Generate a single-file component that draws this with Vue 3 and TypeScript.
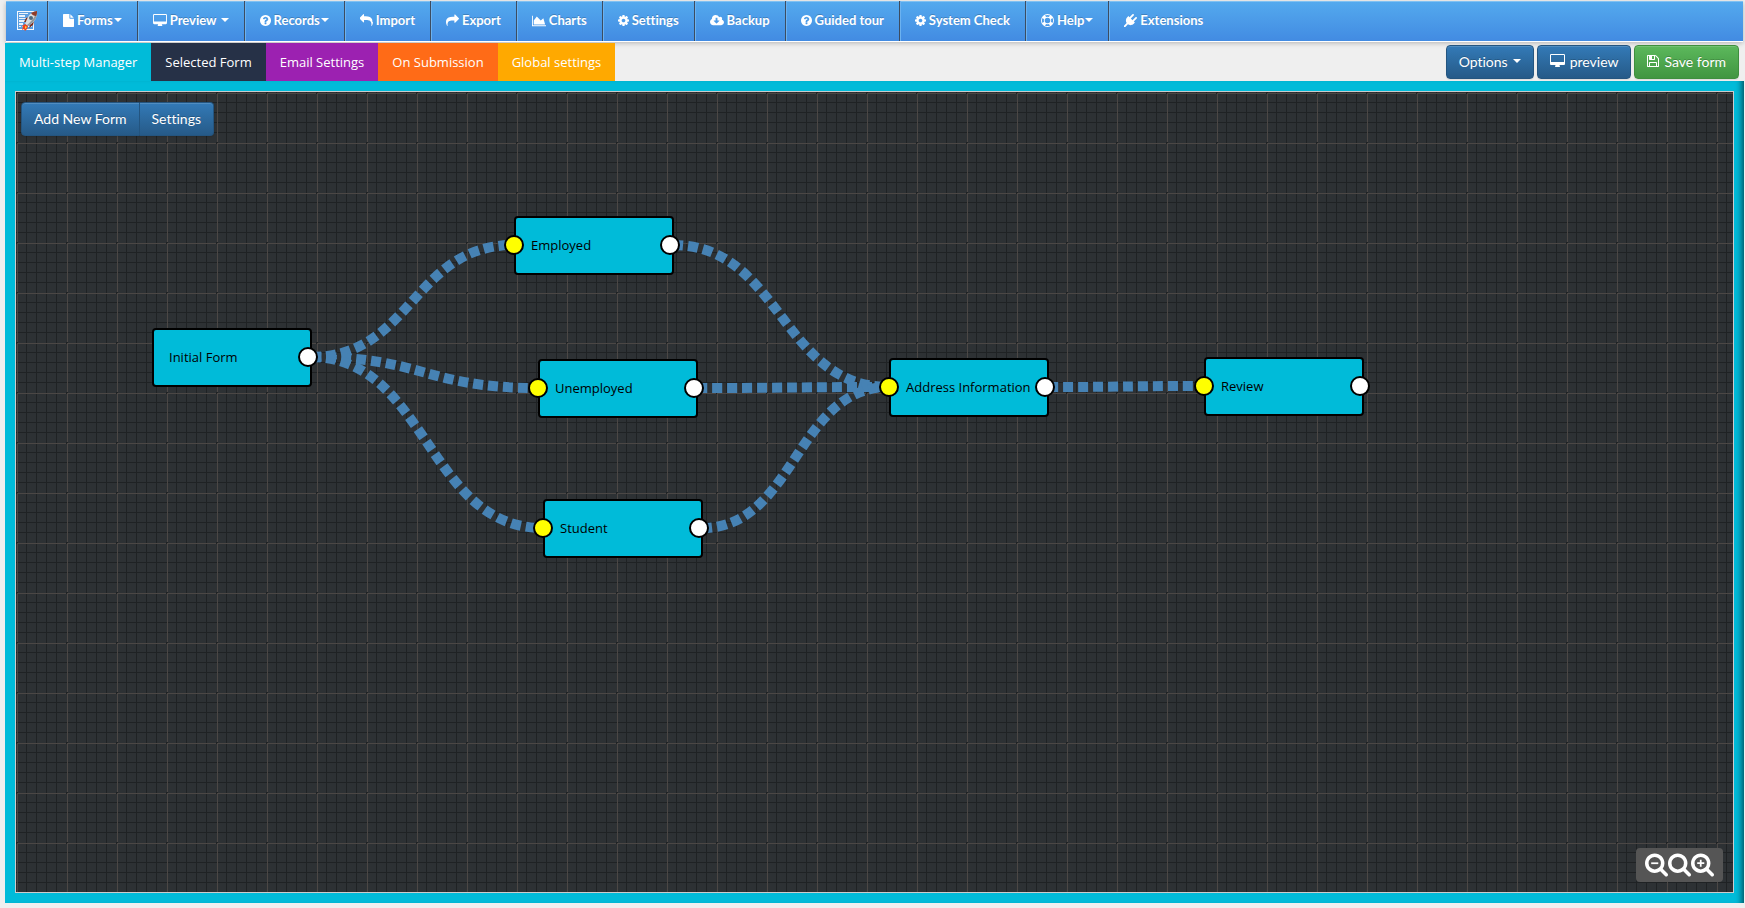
<script setup lang="ts">
type IconName =
  | 'file' | 'desktop' | 'question' | 'reply' | 'share' | 'chart'
  | 'cog' | 'cloud' | 'ring' | 'plug' | 'floppy'

interface MenuItem {
  label: string
  icon: IconName
  caret?: 'tight' | 'wide'
}

interface FormNode {
  id: string
  label: string
  x: number
  y: number
  hasInput: boolean
}

const menu: MenuItem[] = [
  { label: 'Forms', icon: 'file', caret: 'tight' },
  { label: 'Preview', icon: 'desktop', caret: 'wide' },
  { label: 'Records', icon: 'question', caret: 'tight' },
  { label: 'Import', icon: 'reply' },
  { label: 'Export', icon: 'share' },
  { label: 'Charts', icon: 'chart' },
  { label: 'Settings', icon: 'cog' },
  { label: 'Backup', icon: 'cloud' },
  { label: 'Guided tour', icon: 'question' },
  { label: 'System Check', icon: 'cog' },
  { label: 'Help', icon: 'ring', caret: 'tight' },
  { label: 'Extensions', icon: 'plug' },
]

const tabs = [
  { label: 'Multi-step Manager', tone: 'teal' },
  { label: 'Selected Form', tone: 'navy' },
  { label: 'Email Settings', tone: 'purple' },
  { label: 'On Submission', tone: 'orange' },
  { label: 'Global settings', tone: 'amber' },
]

const nodes: FormNode[] = [
  { id: 'initial', label: 'Initial Form', x: 136, y: 236, hasInput: false },
  { id: 'employed', label: 'Employed', x: 498, y: 124, hasInput: true },
  { id: 'unemployed', label: 'Unemployed', x: 522, y: 267, hasInput: true },
  { id: 'student', label: 'Student', x: 527, y: 407, hasInput: true },
  { id: 'address', label: 'Address Information', x: 873, y: 266, hasInput: true },
  { id: 'review', label: 'Review', x: 1188, y: 265, hasInput: true },
]

const links: [string, string][] = [
  ['initial', 'employed'],
  ['initial', 'unemployed'],
  ['initial', 'student'],
  ['employed', 'address'],
  ['unemployed', 'address'],
  ['student', 'address'],
  ['address', 'review'],
]

const OUT_X = 159
const PORT_Y = 29

function curve([from, to]: [string, string]): string {
  const a = nodes.find((n) => n.id === from)!
  const b = nodes.find((n) => n.id === to)!
  const x1 = a.x + OUT_X
  const y1 = a.y + PORT_Y
  const x2 = b.x
  const y2 = b.y + PORT_Y
  const mid = (x1 + x2) / 2
  return `M${x1} ${y1}C${mid} ${y1} ${mid} ${y2} ${x2} ${y2}`
}

const minor = [10, 20, 30, 40]

const icons: Record<IconName, { box: string; size: 'narrow' | 'medium' | 'broad'; d: string }> = {
  file: {
    box: '128 0 1536 1792', size: 'narrow',
    d: 'M1152 512v-472q22 14 36 28l408 408q14 14 28 36h-472zm-128 32q0 40 28 68t68 28h544v1056q0 40-28 68t-68 28h-1344q-40 0-68-28t-28-68v-1600q0-40 28-68t68-28h800v544z',
  },
  desktop: {
    box: '-64 0 1920 1792', size: 'broad',
    d: 'M1728 992v-832q0-13-9.5-22.5t-22.5-9.5h-1600q-13 0-22.5 9.5t-9.5 22.5v832q0 13 9.5 22.5t22.5 9.5h1600q13 0 22.5-9.5t9.5-22.5zm128-832v1088q0 66-47 113t-113 47h-544q0 37 16 77.5t32 71 16 43.5q0 26-19 45t-45 19h-512q-26 0-45-19t-19-45q0-14 16-44t32-70 16-78h-544q-66 0-113-47t-47-113v-1088q0-66 47-113t113-47h1600q66 0 113 47t47 113z',
  },
  question: {
    box: '128 0 1536 1792', size: 'narrow',
    d: 'M1024 1376v-192q0-14-9-23t-23-9h-192q-14 0-23 9t-9 23v192q0 14 9 23t23 9h192q14 0 23-9t9-23zm256-672q0-88-55.5-163t-138.5-116-170-41q-243 0-371 213-15 24 8 42l132 100q7 6 19 6 16 0 25-12 53-68 86-92 34-24 86-24 48 0 85.5 26t37.5 59q0 38-20 61t-68 45q-63 28-115.5 86.5t-52.5 125.5v36q0 14 9 23t23 9h192q14 0 23-9t9-23q0-19 21.5-49.5t54.5-49.5q32-18 49-28.5t46-35 44.5-48 28-60.5 12.5-81zm384 192q0 209-103 385.5t-279.5 279.5-385.5 103-385.5-103-279.5-279.5-103-385.5 103-385.5 279.5-279.5 385.5-103 385.5 103 279.5 279.5 103 385.5z',
  },
  reply: {
    box: '0 0 1792 1792', size: 'medium',
    d: 'M1792 1120q0 166-127 451-3 7-10.5 24t-13.5 30-13 22q-12 17-28 17-15 0-23.5-10t-8.5-25q0-9 2.5-26.5t2.5-23.5q5-68 5-123 0-112-19.5-200.5t-54-153.5-89-112-117.5-78-148.5-47.500-173-22.500-195.500-6h-224v256q0 26-19 45t-45 19-45-19l-512-512q-19-19-19-45t19-45l512-512q19-19 45-19t45 19 19 45v256h224q713 0 875 403 53 134 53 333z',
  },
  share: {
    box: '0 0 1792 1792', size: 'medium',
    d: 'M1792 640q0 26-19 45l-512 512q-19 19-45 19t-45-19-19-45v-256h-224q-98 0-175.500 6t-154 21.500-133 42.500-105.500 69.500-80 101-48.500 138.500-17.500 181q0 55 5 123 0 6 2.500 23.500t2.500 26.500q0 15-8.500 25t-23.500 10q-16 0-28-17-7-9-13-22t-13.500-30-10.500-24q-127-285-127-451 0-199 53-333 162-403 875-403h224v-256q0-26 19-45t45-19 45 19l512 512q19 19 19 45z',
  },
  chart: {
    box: '0 -64 2048 1792', size: 'broad',
    d: 'M2048 1536v128h-2048v-1536h128v1408h1920zm-384-1024l256 896h-1664v-576l448-576 576 576z',
  },
  cog: {
    box: '128 0 1536 1792', size: 'narrow',
    d: 'M1152 896q0-106-75-181t-181-75-181 75-75 181 75 181 181 75 181-75 75-181zm512-109v222q0 12-8 23t-20 13l-185 28q-19 54-39 91 35 50 107 138 10 12 10 25t-9 23q-27 37-99 108t-94 71q-12 0-26-9l-138-108q-44 23-91 38-16 136-29 186-7 28-36 28h-222q-14 0-24.5-8.5t-11.5-21.5l-28-184q-49-16-90-37l-141 107q-10 9-25 9-14 0-25-11-126-114-165-168-7-10-7-23 0-12 8-23 15-21 51-66.5t54-70.5q-27-50-41-99l-183-27q-13-2-21-12.5t-8-23.5v-222q0-12 8-23t19-13l186-28q14-46 39-92-40-57-107-138-10-12-10-24 0-10 9-23 26-36 98.5-107.5t94.5-71.5q13 0 26 10l138 107q44-23 91-38 16-136 29-186 7-28 36-28h222q14 0 24.5 8.5t11.5 21.5l28 184q49 16 90 37l142-107q9-9 24-9 13 0 25 10 129 119 165 170 7 8 7 22 0 12-8 23-15 21-51 66.500t-54 70.500q26 50 41 98l183 28q13 2 21 12.500t8 23.500z',
  },
  cloud: {
    box: '0 0 1920 1792', size: 'broad',
    d: 'M1280 928q0-14-9-23t-23-9h-224v-352q0-13-9.5-22.5t-22.5-9.5h-192q-13 0-22.5 9.5t-9.5 22.5v352h-224q-13 0-22.5 9.5t-9.5 22.5q0 14 9 23l352 352q9 9 23 9t23-9l351-351q10-12 10-24zm640 224q0 159-112.5 271.5t-271.5 112.5h-1088q-185 0-316.5-131.5t-131.5-316.5q0-130 70-240t188-165q-2-30-2-43 0-212 150-362t362-150q156 0 285.5 87t188.500 231q71-62 166-62 106 0 181 75t75 181q0 76-41 138 130 31 213.500 135.500t83.500 238.500z',
  },
  ring: {
    box: '0 0 1792 1792', size: 'medium',
    d: 'M896 0a896 896 0 1 0 0 1792a896 896 0 1 0 0-1792zM896 128q190 0 361 90l-194 194q-167-56-334 0l-194-194q171-90 361-90zM218 1257q-90-171-90-361t90-361l194 194q-56 167 0 334zM896 1664q-190 0-361-90l194-194q167 56 334 0l194 194q-171 90-361 90zM896 1280a384 384 0 1 1 0-768a384 384 0 1 1 0 768zM1380 1063q56-167 0-334l194-194q90 171 90 361t-90 361z',
  },
  plug: {
    box: '0 0 1792 1792', size: 'medium',
    d: 'M1755 453q37 38 37 90.500t-37 90.500l-401 400 150 150-160 160q-163 163-389.500 186.500t-411.500-100.500l-362 362h-181v-181l362-362q-124-185-100.500-411.500t186.500-389.500l160-160 150 150 400-401q38-37 91-37t90 37 37 90.500-37 90.500l-400 401 234 234 401-400q38-37 91-37t90 37z',
  },
  floppy: {
    box: '128 0 1536 1792', size: 'narrow',
    d: 'M512 1536h768v-384h-768v384zm896 0h128v-896q0-14-10-38.5t-20-34.5l-281-281q-10-10-34-20t-39-10v416q0 40-28 68t-68 28h-576q-40 0-68-28t-28-68v-416h-128v1280h128v-416q0-40 28-68t68-28h832q40 0 68 28t28 68v416zm-384-928v-320q0-13-9.5-22.5t-22.5-9.5h-192q-13 0-22.5 9.5t-9.5 22.5v320q0 13 9.5 22.5t22.5 9.5h192q13 0 22.5-9.5t9.5-22.5zm640 32v928q0 40-28 68t-68 28h-1344q-40 0-68-28t-28-68v-1344q0-40 28-68t68-28h928q40 0 88 20t76 48l280 280q28 28 48 76t20 88z',
  },
}

const lens =
  'M1216 832q0-185-131.5-316.5t-316.5-131.5-316.5 131.5-131.5 316.5 131.5 316.5 316.5 131.5 316.5-131.5 131.5-316.5zm512 832q0 52-38 90t-90 38q-54 0-90-38l-343-342q-179 124-399 124-143 0-273.5-55.5t-225-150-150-225-55.5-273.5 55.5-273.5 150-225 225-150 273.5-55.5 273.5 55.5 225 150 150 225 55.5 273.5q0 220-124 399l343 343q37 37 37 90z'

const zooms = [
  { label: 'Zoom out', sign: 'M512 768h512v128h-512z' },
  { label: 'Reset zoom', sign: '' },
  { label: 'Zoom in', sign: 'M512 768h192v-192h128v192h192v128h-192v192h-128v-192h-192z' },
]
</script>

<template>
  <div class="page">
    <nav class="menubar" aria-label="Main">
      <a href="#" class="brand" aria-label="Home">
        <svg class="logo" viewBox="0 0 22 22" aria-hidden="true">
          <path d="M1 1h17v19H1z" fill="#f4f8fd" />
          <path d="M2 2h15v17H2z" fill="#5c9fe0" />
          <path d="M3 3h9v1H3zM3 5h6v2H3zM3 8h7v1H3zM3 10h6v2H3zM3 13h4v2H3zM3 16h2v1H3zM6 16h2v1H6zM12 16h2v1h-2zM15 12h1v5h-1z" fill="#e9f2fc" />
          <path d="M8 12l2-4 3-1-3 5zM13 18l4-3 1-4-4 4z" fill="#7c2f20" />
          <path d="M21 1c-4 0-8 3-10 8l-2 5 3 2 4-3c4-3 5-7 5-12z" fill="#d9dde0" />
          <path d="M21 1c-1 4-4 9-10 14l1 1 4-3c4-3 5-7 5-12z" fill="#8f989e" />
          <path d="M21 1c-2 0-4 1-6 2 1 2 3 3 5 3 1-2 1-3 1-5z" fill="#8e3b29" />
          <circle cx="15" cy="8" r="2" fill="#4a6a80" />
          <path d="M9 14l3 2-1 3-2 2-1-2-2 1 1-3-1-1z" fill="#f0421c" />
          <path d="M9 16l2 1-2 2z" fill="#ffd33a" />
        </svg>
      </a>
      <a v-for="item in menu" :key="item.label" href="#" class="entry">
        <svg class="icon" :class="icons[item.icon].size" :viewBox="icons[item.icon].box" aria-hidden="true">
          <path :d="icons[item.icon].d" fill-rule="evenodd" />
        </svg>
        <span>{{ item.label }}</span>
        <i v-if="item.caret" class="caret" :class="item.caret"></i>
      </a>
    </nav>

    <header class="toolbar">
      <div class="tabs">
        <button v-for="tab in tabs" :key="tab.label" type="button" class="tab" :class="tab.tone">{{ tab.label }}</button>
      </div>
      <div class="actions">
        <button type="button" class="btn">Options<i class="caret"></i></button>
        <button type="button" class="btn">
          <svg class="icon screen" :viewBox="icons.desktop.box" aria-hidden="true"><path :d="icons.desktop.d" fill-rule="evenodd" /></svg>preview
        </button>
        <button type="button" class="btn green">
          <svg class="icon disk" :viewBox="icons.floppy.box" aria-hidden="true"><path :d="icons.floppy.d" fill-rule="evenodd" /></svg>Save form
        </button>
      </div>
    </header>

    <main class="panel">
      <div class="canvas">
        <svg class="layer" aria-hidden="true">
          <defs>
            <pattern id="paper" width="50" height="50" patternUnits="userSpaceOnUse" shape-rendering="crispEdges">
              <rect width="50" height="50" fill="#2d3134" />
              <g fill="#1f2224">
                <rect v-for="m in minor" :key="'v' + m" :x="m" y="0" width="1" height="50" />
                <rect v-for="m in minor" :key="'h' + m" x="0" :y="m" width="50" height="1" />
              </g>
              <rect x="1" width="1" height="50" fill="#4b4745" />
              <rect y="1" width="50" height="1" fill="#4b4745" />
              <rect width="2" height="1" fill="#1f2224" />
              <rect width="1" height="2" fill="#1f2224" />
            </pattern>
          </defs>
          <rect width="100%" height="100%" fill="url(#paper)" />
          <path v-for="link in links" :key="link.join()" class="wire" :d="curve(link)" />
        </svg>

        <div v-for="node in nodes" :key="node.id" class="node" :style="{ left: node.x + 'px', top: node.y + 'px' }">
          <i v-if="node.hasInput" class="port in"></i>
          <span>{{ node.label }}</span>
          <i class="port out"></i>
        </div>

        <div class="group">
          <button type="button" class="btn">Add New Form</button>
          <button type="button" class="btn">Settings</button>
        </div>

        <div class="zoom">
          <button v-for="z in zooms" :key="z.label" type="button" :aria-label="z.label">
            <svg viewBox="64 128 1664 1664" aria-hidden="true"><path :d="lens" fill-rule="evenodd" /><path v-if="z.sign" :d="z.sign" /></svg>
          </button>
        </div>
      </div>
    </main>
  </div>
</template>

<style>
body {
  margin: 0;
  background: #efefef;
}
</style>

<style scoped>
.page {
  box-sizing: border-box;
  display: flex;
  flex-direction: column;
  min-height: 100vh;
  padding: 1px 1px 5px 5px;
  font-family: "Open Sans", "Noto Sans", sans-serif;
  font-size: 13px;
  font-variant-ligatures: none;
}
button {
  margin: 0;
  border: 0;
  font: inherit;
  font-variant-ligatures: none;
  color: inherit;
  cursor: pointer;
}
.icon {
  flex: none;
  height: 13px;
  fill: currentColor;
}
.narrow { width: 11px; }
.medium { width: 13px; }
.broad { width: 14px; }

.menubar {
  display: flex;
  height: 40px;
  margin: 0 1px;
  background: linear-gradient(#54aaee, #428be2);
  box-shadow: inset 0 1px #80c1f2, 0 1px #fff, 0 2px 5px rgba(0, 0, 0, 0.25);
  font-family: Lato, "Open Sans", sans-serif;
  font-weight: 700;
}
.brand,
.entry {
  display: flex;
  align-items: center;
  color: #fff;
  text-decoration: none;
  white-space: nowrap;
}
.brand {
  padding: 0 9px 0 10px;
}
.entry {
  gap: 3px;
  padding: 0 15px 2px 15px;
  border-left: 1px solid #3c4c60;
  box-shadow: inset 1px 0 #6cb2f0;
  text-shadow: 0 -1px rgba(0, 0, 0, 0.2);
}
.logo {
  width: 22px;
  height: 22px;
}
.caret {
  border: 4px solid transparent;
  border-top-color: currentColor;
  border-bottom: 0;
}
.caret.tight { margin-left: -2px; }
.caret.wide { margin-left: 1px; }

.toolbar {
  display: flex;
  justify-content: space-between;
  margin-top: 2px;
  height: 38px;
}
.tabs {
  display: flex;
  position: relative;
}
.tab {
  padding: 0 14px;
  color: #fff;
  white-space: nowrap;
}
.teal { background: #00bbd9; }
.navy { background: #263147; }
.purple { background: #9c21b1; }
.orange { background: #ff6b17; }
.amber { background: #ffa900; }

.actions {
  display: flex;
  align-items: center;
  gap: 3px;
  padding-right: 5px;
}
.btn {
  display: flex;
  align-items: center;
  gap: 5px;
  height: 34px;
  padding: 0 12px 2px;
  border: 1px solid #245580;
  border-radius: 4px;
  background: linear-gradient(#337ab7, #265a88);
  box-shadow: inset 0 1px rgba(255, 255, 255, 0.15), 0 1px 1px rgba(0, 0, 0, 0.08);
  font-family: Lato, "Open Sans", sans-serif;
  font-size: 14px;
  color: #fff;
  white-space: nowrap;
  text-shadow: 0 -1px rgba(0, 0, 0, 0.2);
}
.green {
  border-color: #3e8f3e;
  background: linear-gradient(#5cb85c, #419641);
}
.screen {
  width: 15px;
  height: 14px;
}
.disk {
  width: 12px;
  height: 14px;
}

.panel {
  display: flex;
  flex: 1;
  padding: 10px;
  background: #00bbd9;
  box-shadow: inset -7px 0 6px -5px rgba(0, 0, 0, 0.6);
}
.canvas {
  position: relative;
  flex: 1;
  overflow: hidden;
  border: 1px solid #ccc;
}
.layer {
  position: absolute;
  width: 100%;
  height: 100%;
}
.wire {
  fill: none;
  stroke: #4682b4;
  stroke-width: 10;
  stroke-dasharray: 10 5;
}
.node {
  position: absolute;
  box-sizing: border-box;
  display: flex;
  align-items: center;
  width: 160px;
  height: 59px;
  padding: 0 0 2px 15px;
  border: 2px solid #000;
  border-radius: 4px;
  background: #00bbd9;
  color: #000;
  white-space: nowrap;
}
.port {
  position: absolute;
  top: 17px;
  box-sizing: border-box;
  width: 20px;
  height: 20px;
  border: 2px solid #000;
  border-radius: 50%;
}
.in {
  left: -12px;
  background: #ff0;
}
.out {
  right: -8px;
  background: #fff;
}
.group {
  position: absolute;
  top: 10px;
  left: 5px;
  display: flex;
}
.group .btn:first-child {
  border-radius: 4px 0 0 4px;
}
.group .btn:last-child {
  border-left: 0;
  border-radius: 0 4px 4px 0;
}
.zoom {
  position: absolute;
  right: 10px;
  bottom: 10px;
  display: flex;
  padding: 5px 9px;
  border-radius: 4px;
  background: #555;
  color: #fff;
}
.zoom button {
  display: flex;
  padding: 0;
  background: none;
}
.zoom svg {
  width: 23px;
  height: 24px;
  fill: currentColor;
}
</style>
